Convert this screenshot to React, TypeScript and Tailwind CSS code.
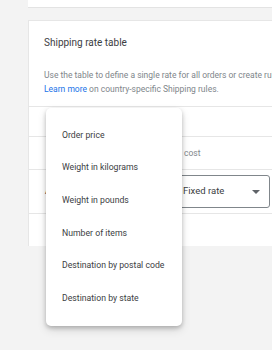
import { useState } from 'react';

// Shipping rate table card with an open "condition" dropdown menu

const MENU_ITEMS = [
  'Order price',
  'Weight in kilograms',
  'Weight in pounds',
  'Number of items',
  'Destination by postal code',
  'Destination by state',
];

function CaretDown() {
  return (
    <svg width="8" height="4" viewBox="0 0 10 5" className="fill-[#5f6368]">
      <path d="M0 0l5 5 5-5z" />
    </svg>
  );
}

export default function App() {
  const [open] = useState(true);

  return (
    <div
      className="relative w-[272px] h-[350px] overflow-hidden bg-[#f3f3f3]"
      style={{ fontFamily: 'Roboto, "Liberation Sans", sans-serif' }}
    >
      {/* previous card, mostly scrolled away */}
      <div className="ml-[28px] h-[8px] bg-white border-b border-[#e3e3e3]" />

      {/* Shipping rate table card */}
      <div className="ml-[28px] mt-[12px] h-[226px] bg-white border-t border-l border-[#e6e6e6]">
        <div className="pl-[15px] pt-[15px] pb-[10px]">
          <div className="text-[10px] leading-[14px] text-[#3c4043]">Shipping rate table</div>
          <div className="mt-[18px] text-[8.5px] leading-[14px] text-[#80868b] whitespace-nowrap">
            <div>Use the table to define a single rate for all orders or create rules</div>
            <div>
              <span className="text-[#1a73e8]">Learn more</span> on country-specific Shipping rules.
            </div>
          </div>
        </div>

        <div className="border-t border-[#e6e6e6] h-[30px]" />

        <div className="border-t border-[#e6e6e6] h-[33px] flex items-center pl-[120px] text-[8.5px] text-[#80868b] whitespace-nowrap">
          <span>Shipping cost</span>
        </div>

        <div className="border-t border-[#e6e6e6] h-[44px] flex items-center text-[9.5px] text-[#3c4043] whitespace-nowrap">
          <span className="pl-[16px] w-[142px]">All orders</span>
          <div className="flex-1 h-[33px] mr-[2px] border border-[#80868b] rounded-[3px] flex items-center justify-between pl-[11px] pr-[9px]">
            <span>Fixed rate</span>
            <CaretDown />
          </div>
        </div>

        <div className="border-t border-[#e6e6e6]" />
      </div>

      {/* dropdown menu */}
      {open && (
        <div className="absolute left-[46px] top-[108px] w-[136px] py-[11px] bg-white rounded-[5px] shadow-[0_2px_4px_rgba(0,0,0,0.22),0_4px_10px_rgba(0,0,0,0.12)]">
          {MENU_ITEMS.map((item) => (
            <div
              key={item}
              className="h-[32.6px] flex items-center pl-[16px] text-[8.7px] text-[#3c4043] whitespace-nowrap"
            >
              {item}
            </div>
          ))}
        </div>
      )}
    </div>
  );
}
